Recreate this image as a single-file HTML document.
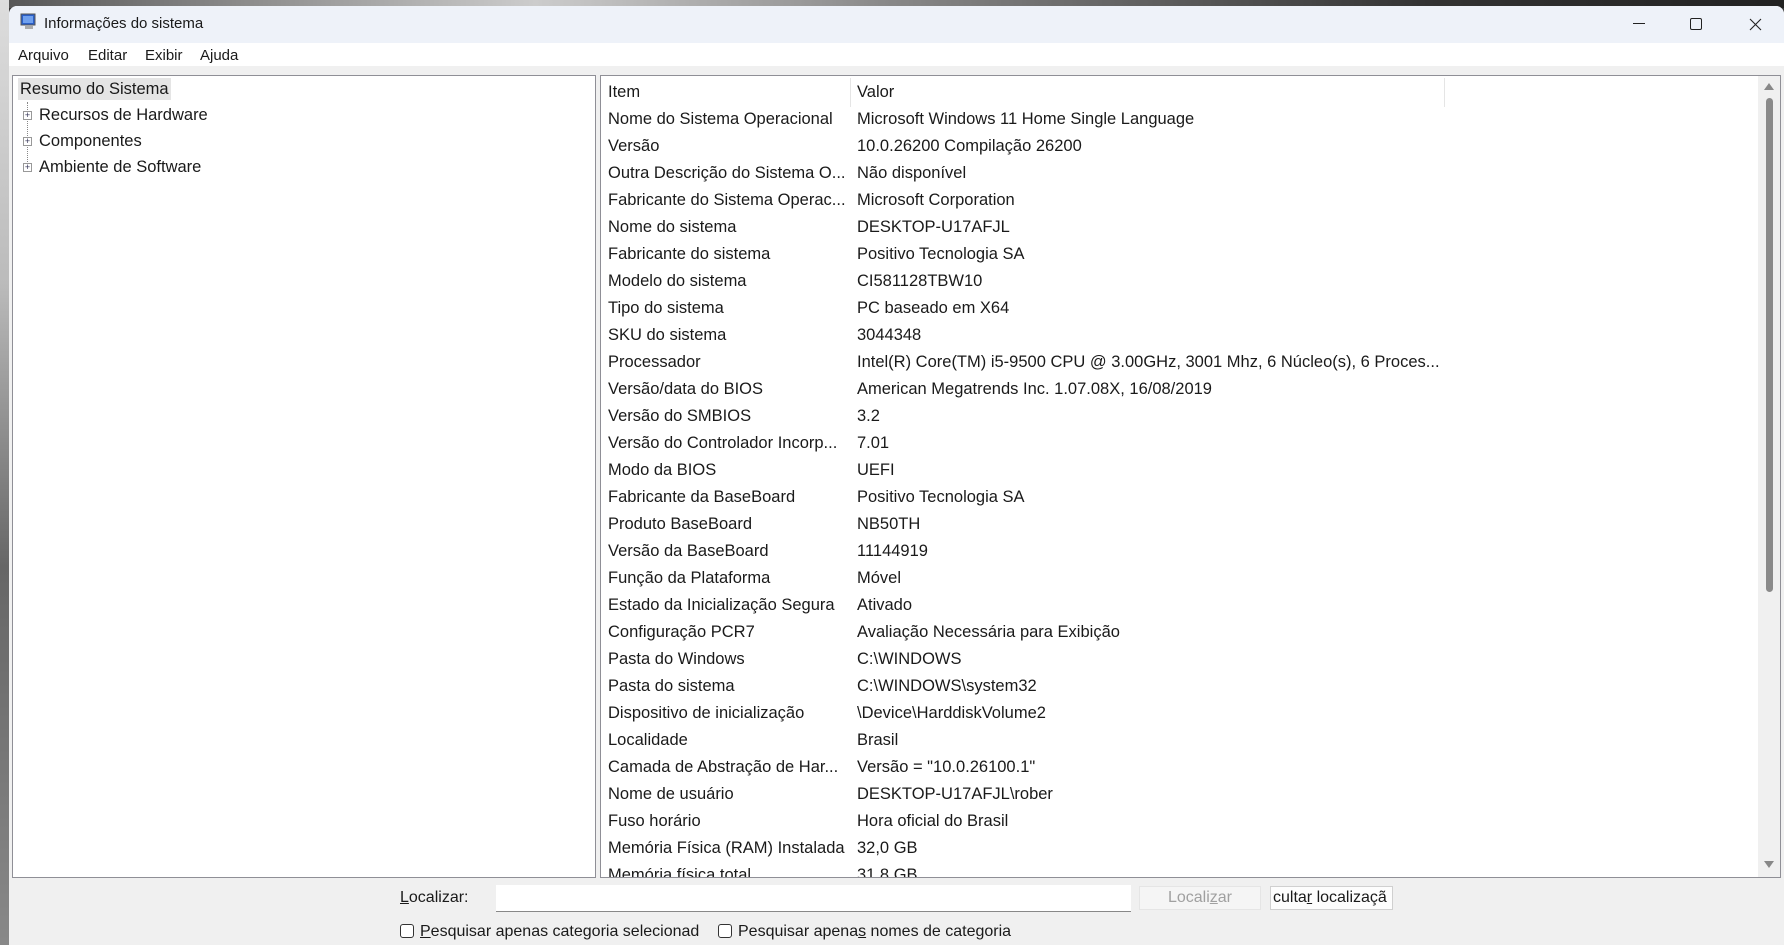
<!DOCTYPE html>
<html><head><meta charset="utf-8"><style>
*{margin:0;padding:0;box-sizing:border-box}
body{width:1784px;height:945px;overflow:hidden;background:#3a3a3a;font-family:"Segoe UI","Liberation Sans",sans-serif;color:#1a1a1a;position:relative}
.abs{position:absolute}
.t{position:absolute;white-space:nowrap;font-size:16px;line-height:20px}
</style></head><body>
<div class="abs" style="left:0;top:0;width:1784px;height:8px;background:linear-gradient(90deg,#555,#ccc 30%,#888 50%,#333 80%,#222)"></div>
<div class="abs" style="left:0;top:0;width:9px;height:945px;background:linear-gradient(180deg,#ddd,#bbb 30%,#666 60%,#888)"></div>
<div class="abs" style="left:9px;top:6px;width:1775px;height:939px;background:#f0f0f0;border-radius:8px 8px 0 0;overflow:hidden">
  <div class="abs" style="left:0;top:0;width:1775px;height:37px;background:#eef2f9"></div>
  <div class="abs" style="left:0;top:37px;width:1775px;height:23px;background:#fff"></div>
</div>
<!-- title icon -->
<svg class="abs" style="left:20px;top:13px" width="18" height="18" viewBox="0 0 18 18"><rect x="1" y="1" width="14" height="11" fill="#2a5fc8" stroke="#555" stroke-width="1"/><rect x="3" y="3" width="10" height="7" fill="#6fa0ee"/><rect x="5" y="13" width="8" height="3" fill="#aaa"/></svg>
<div class="t" style="left:44px;top:14px;font-size:15px">Informações do sistema</div>
<!-- window controls -->
<div class="abs" style="left:1633px;top:23px;width:12px;height:1px;background:#222"></div>
<div class="abs" style="left:1690px;top:18px;width:12px;height:12px;border:1px solid #222;border-radius:2px"></div>
<svg class="abs" style="left:1749px;top:18px" width="13" height="13"><path d="M1 1L12 12M12 1L1 12" stroke="#222" stroke-width="1.1"/></svg>
<!-- menu -->
<div class="t" style="left:18px;top:46px;font-size:15px">Arquivo</div>
<div class="t" style="left:88px;top:46px;font-size:15px">Editar</div>
<div class="t" style="left:145px;top:46px;font-size:15px">Exibir</div>
<div class="t" style="left:200px;top:46px;font-size:15px">Ajuda</div>
<!-- left panel -->
<div class="abs" style="left:12px;top:75px;width:584px;height:803px;background:#fff;border:1px solid #8f8f96"></div>
<div class="abs" style="left:18px;top:78px;width:153px;height:22px;background:#e5e5e5"></div>
<div class="t" style="left:20px;top:79px;font-size:16.5px">Resumo do Sistema</div>
<div class="abs" style="left:27px;top:102px;height:70px;border-left:1px dotted #888"></div>
<div class="abs" style="left:23px;top:111px;width:9px;height:9px;border:1px solid #999;background:#fff;font-size:9px;line-height:7px;text-align:center;color:#335">+</div>
<div class="abs" style="left:23px;top:137px;width:9px;height:9px;border:1px solid #999;background:#fff;font-size:9px;line-height:7px;text-align:center;color:#335">+</div>
<div class="abs" style="left:23px;top:163px;width:9px;height:9px;border:1px solid #999;background:#fff;font-size:9px;line-height:7px;text-align:center;color:#335">+</div>
<div class="t" style="left:39px;top:105px;font-size:16.5px">Recursos de Hardware</div>
<div class="t" style="left:39px;top:131px;font-size:16.5px">Componentes</div>
<div class="t" style="left:39px;top:157px;font-size:16.5px">Ambiente de Software</div>
<!-- right panel -->
<div class="abs" style="left:600px;top:75px;width:1181px;height:803px;background:#fff;border:1px solid #8f8f96;overflow:hidden">
  <div class="abs" style="left:249px;top:2px;width:1px;height:29px;background:#e5e5e5"></div>
  <div class="abs" style="left:843px;top:2px;width:1px;height:29px;background:#e5e5e5"></div>
  <div class="t" style="left:7px;top:6px;font-size:16.5px">Item</div>
  <div class="t" style="left:256px;top:6px;font-size:16.5px">Valor</div>
  <div id="rows"></div>
  <div class="abs" style="left:1157px;top:0;width:22px;height:801px;background:#f0f0f0"></div>
  <svg class="abs" style="left:1162px;top:5px" width="12" height="10"><path d="M1 9L6 2L11 9Z" fill="#888"/></svg>
  <svg class="abs" style="left:1162px;top:784px" width="12" height="10"><path d="M1 1L6 8L11 1Z" fill="#888"/></svg>
  <div class="abs" style="left:1165px;top:22px;width:7px;height:494px;background:#8a8a8a;border-radius:4px"></div>
</div>
<!-- bottom -->
<div class="t" style="left:400px;top:888px;font-size:16px"><u>L</u>ocalizar:</div>
<div class="abs" style="left:496px;top:885px;width:635px;height:27px;background:#fff;border-bottom:1px solid #888"></div>
<div class="abs" style="left:1139px;top:886px;width:122px;height:24px;background:#f5f5f5;border:1px solid #e5e5e5;color:#a0a0a0;font-size:16px;line-height:22px;text-align:center">Locali<u>z</u>ar</div>
<div class="abs" style="left:1270px;top:886px;width:123px;height:24px;background:#fdfdfd;border:1px solid #d0d0d0;font-size:16px;line-height:22px;overflow:hidden;white-space:nowrap;padding-left:2px">culta<u>r</u> localizaçã</div>
<div class="abs" style="left:400px;top:924px;width:14px;height:14px;border:1px solid #333;border-radius:3px;background:#fff"></div>
<div class="t" style="left:420px;top:922px;font-size:16px"><u>P</u>esquisar apenas categoria selecionad</div>
<div class="abs" style="left:718px;top:924px;width:14px;height:14px;border:1px solid #333;border-radius:3px;background:#fff"></div>
<div class="t" style="left:738px;top:922px;font-size:16px">Pesquisar apena<u>s</u> nomes de categoria</div>
<script>
var d=[["Nome do Sistema Operacional","Microsoft Windows 11 Home Single Language"],["Versão","10.0.26200 Compilação 26200"],["Outra Descrição do Sistema O...","Não disponível"],["Fabricante do Sistema Operac...","Microsoft Corporation"],["Nome do sistema","DESKTOP-U17AFJL"],["Fabricante do sistema","Positivo Tecnologia SA"],["Modelo do sistema","CI581128TBW10"],["Tipo do sistema","PC baseado em X64"],["SKU do sistema","3044348"],["Processador","Intel(R) Core(TM) i5-9500 CPU @ 3.00GHz, 3001 Mhz, 6 Núcleo(s), 6 Proces..."],["Versão/data do BIOS","American Megatrends Inc. 1.07.08X, 16/08/2019"],["Versão do SMBIOS","3.2"],["Versão do Controlador Incorp...","7.01"],["Modo da BIOS","UEFI"],["Fabricante da BaseBoard","Positivo Tecnologia SA"],["Produto BaseBoard","NB50TH"],["Versão da BaseBoard","11144919"],["Função da Plataforma","Móvel"],["Estado da Inicialização Segura","Ativado"],["Configuração PCR7","Avaliação Necessária para Exibição"],["Pasta do Windows","C:\\WINDOWS"],["Pasta do sistema","C:\\WINDOWS\\system32"],["Dispositivo de inicialização","\\Device\\HarddiskVolume2"],["Localidade","Brasil"],["Camada de Abstração de Har...","Versão = \"10.0.26100.1\""],["Nome de usuário","DESKTOP-U17AFJL\\rober"],["Fuso horário","Hora oficial do Brasil"],["Memória Física (RAM) Instalada","32,0 GB"],["Memória física total","31,8 GB"]];
var h="";d.forEach(function(r,i){var y=33+i*27;h+='<div class="t" style="left:7px;top:'+y+'px;font-size:16.5px">'+r[0]+'</div><div class="t" style="left:256px;top:'+y+'px;font-size:16.5px">'+r[1]+'</div>';});
document.getElementById("rows").innerHTML=h;
</script>
</body></html>
